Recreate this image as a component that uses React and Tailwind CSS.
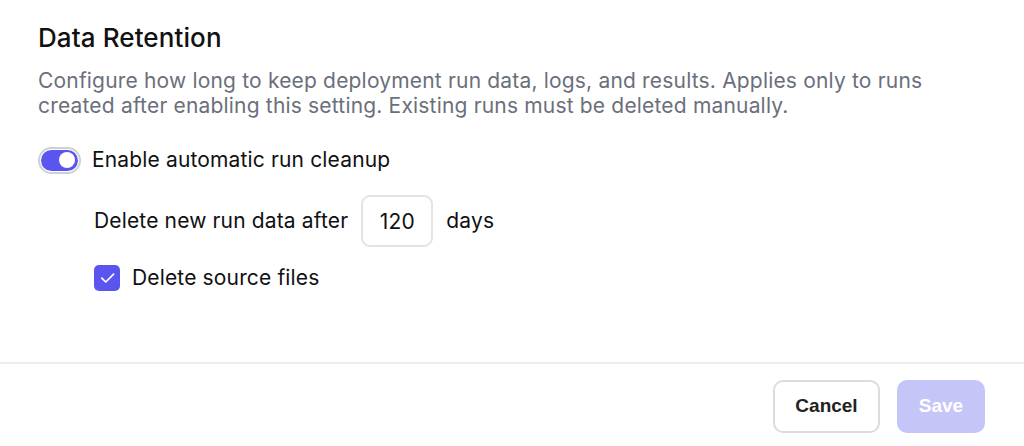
export default function App() {
    return (
        <div className="w-[1024px] h-[446px] bg-white flex flex-col font-['Inter',sans-serif] text-[#111111]">
            <div className="flex-1 pl-[38px] pr-6 pt-[22px]">
                <h2 className="text-[26px] leading-[32px] font-medium tracking-[0.1px]">Data Retention</h2>
                <p className="mt-[14px] text-[21px] leading-[25px] tracking-[0.18px] text-[#6b6f7b]">
                    Configure how long to keep deployment run data, logs, and results. Applies only to runs
                    <br />
                    created after enabling this setting. Existing runs must be deleted manually.
                </p>

                <label className="mt-[28px] flex items-center gap-[11px]">
                    <span className="w-[43px] h-[27px] rounded-full border-[2px] border-[#cfd0d6] p-[1px] flex">
                        <span className="flex-1 rounded-full bg-[#5a55ef] flex items-center justify-end pr-[3px]">
                            <span className="w-[16px] h-[16px] rounded-full bg-white" />
                        </span>
                    </span>
                    <span className="text-[21px] leading-[28px] tracking-[0.15px]">Enable automatic run cleanup</span>
                </label>

                <div className="ml-[56px] mt-[21px] flex items-center gap-[13px] text-[21px] tracking-[0.15px]">
                    <span>Delete new run data after</span>
                    <input
                        type="text"
                        defaultValue="120"
                        className="w-[72px] h-[52px] rounded-[9px] border-[2px] border-[#e4e4e7] text-center outline-none"
                    />
                    <span>days</span>
                </div>

                <label className="ml-[56px] mt-[17px] flex items-center gap-[12px]">
                    <span className="w-[26px] h-[26px] rounded-[5px] bg-[#5a55ef] flex items-center justify-center">
                        <svg width="21" height="21" viewBox="0 0 24 24" fill="none" stroke="white" strokeWidth="2" strokeLinecap="round" strokeLinejoin="round">
                            <path d="M19 7 10 16l-4.5-4.5" />
                        </svg>
                    </span>
                    <span className="text-[21px] leading-[28px] tracking-[0.15px]">Delete source files</span>
                </label>
            </div>

            <div className="border-t-[2px] border-[#eeeeee] h-[84px] flex items-start justify-end gap-[17px] pt-[16px] pr-[39px]">
                <button className="w-[107px] h-[53px] rounded-[10px] border-[2px] border-[#dcdcdc] bg-white font-['Liberation_Sans',sans-serif] font-bold text-[19px] text-[#222]">
                    Cancel
                </button>
                <button className="w-[88px] h-[53px] rounded-[10px] bg-[#c6c5f7] font-['Liberation_Sans',sans-serif] font-bold text-[19px] text-white">
                    Save
                </button>
            </div>
        </div>
    );
}
